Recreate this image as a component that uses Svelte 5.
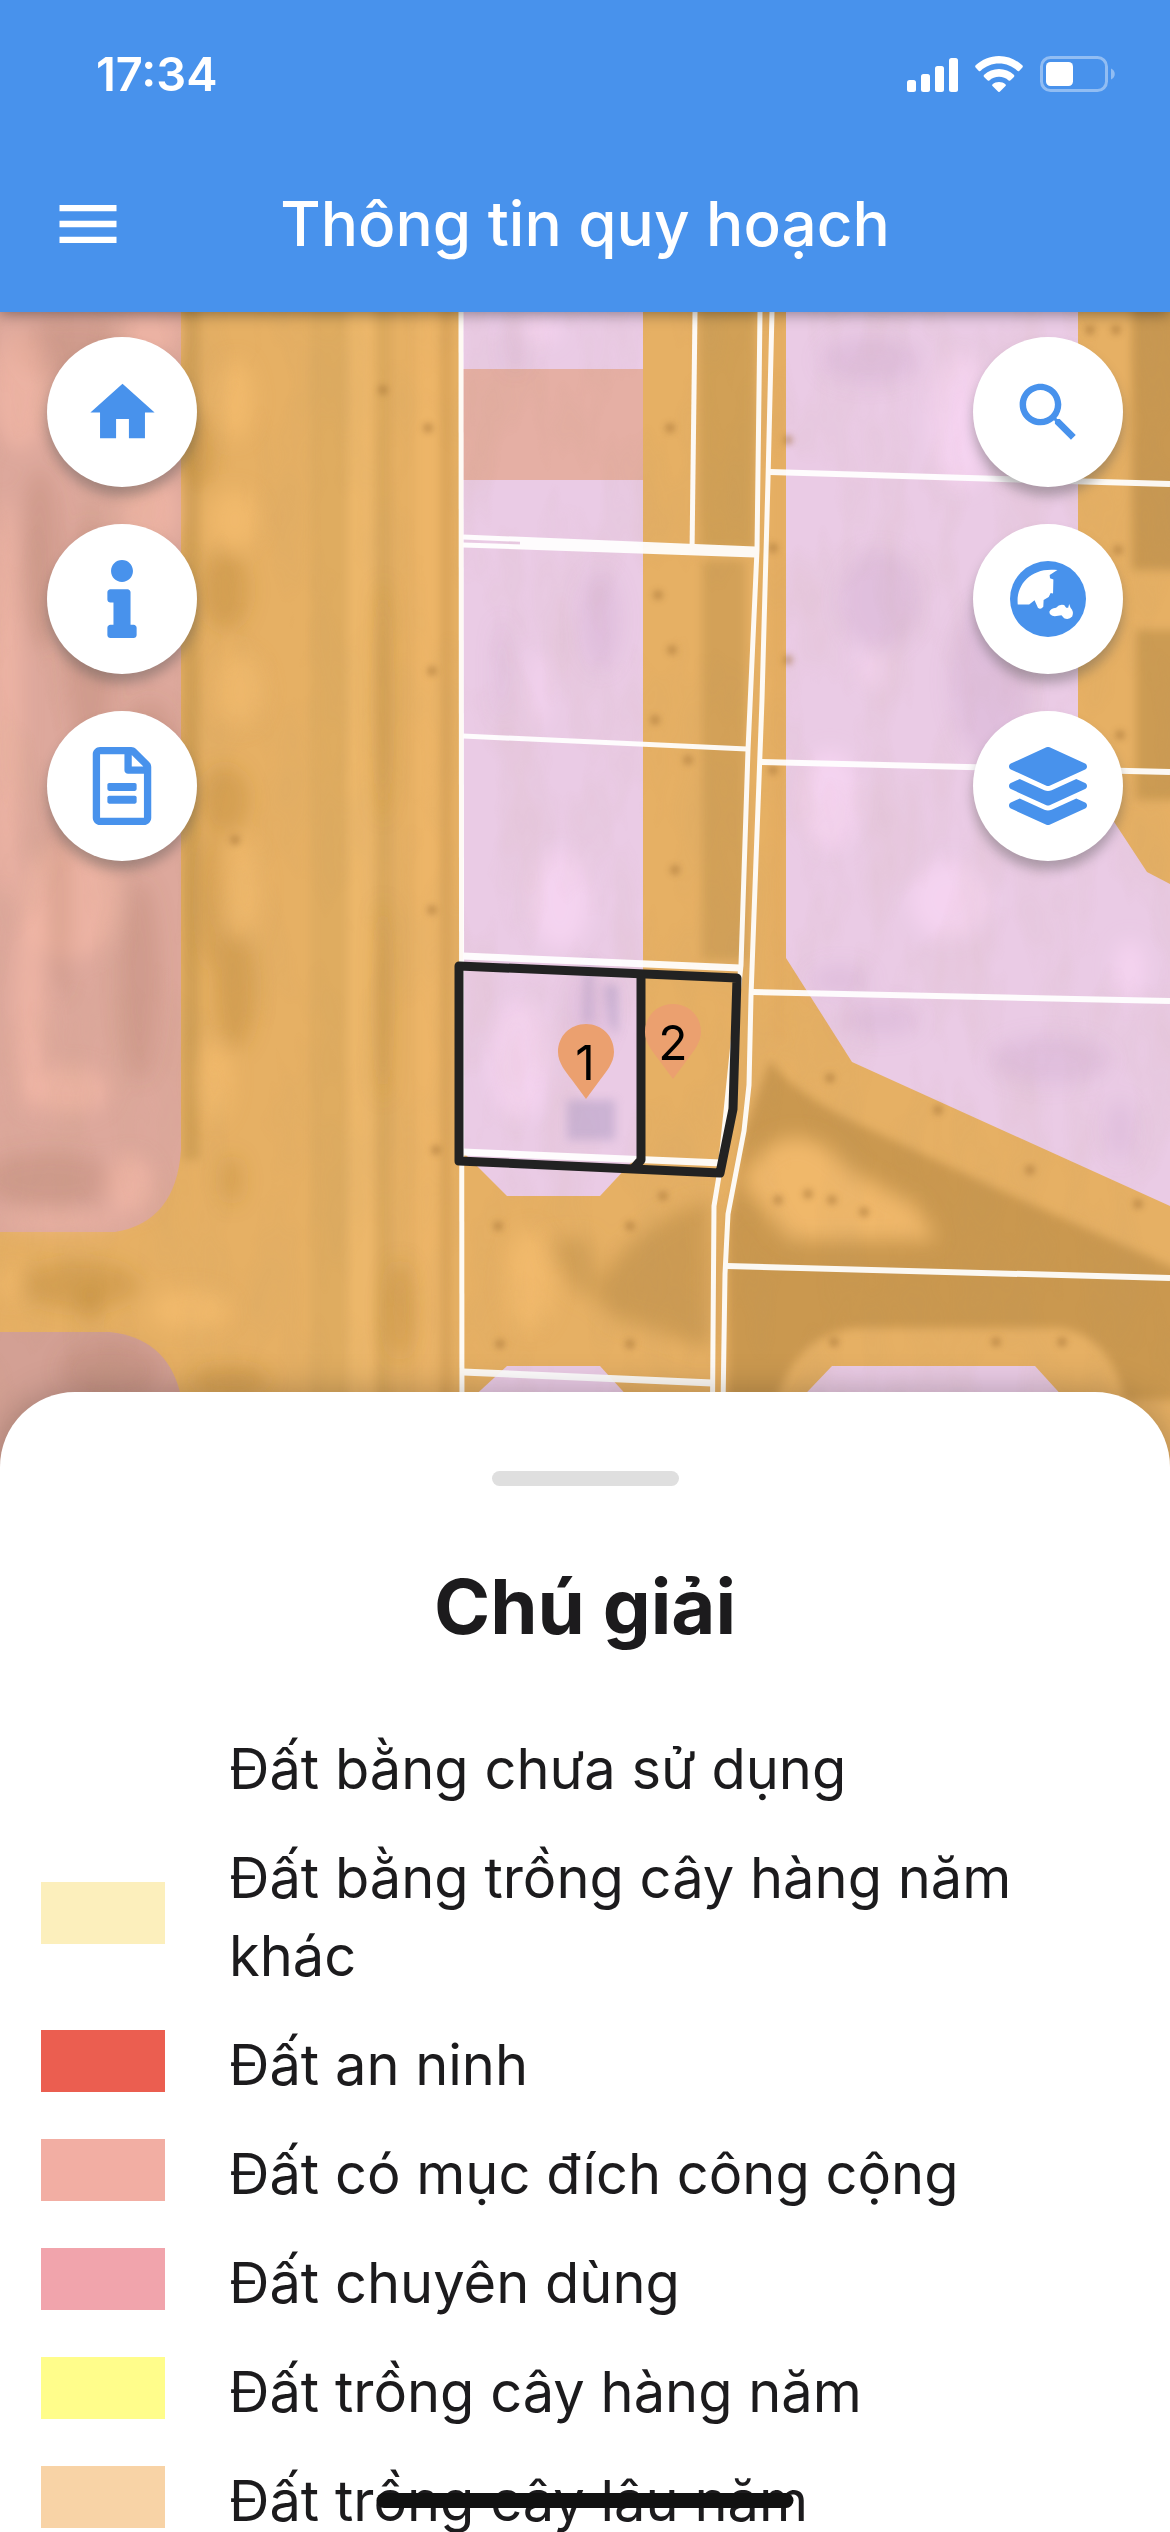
<script>
  const legend = [
    { label: 'Đất bằng chưa sử dụng', color: '#ffffff' },
    { label: 'Đất bằng trồng cây hàng năm khác', color: '#fcefbc' },
    { label: 'Đất an ninh', color: '#eb5e50' },
    { label: 'Đất có mục đích công cộng', color: '#f2aea3' },
    { label: 'Đất chuyên dùng', color: '#f1a4ac' },
    { label: 'Đất trồng cây hàng năm', color: '#fffd8b' },
    { label: 'Đất trồng cây lâu năm', color: '#f8d3a6' }
  ];

  // Soft terrain patches: [cx, cy, rx, ry, tone]
  const tones = {
    d: { fill: '#9c6a4a', opacity: 0.2 },
    l: { fill: '#ffc0ac', opacity: 0.45 },
    o: { fill: '#b07c2c', opacity: 0.32 },
    y: { fill: '#f8bf70', opacity: 0.6 },
    v: { fill: '#b893bd', opacity: 0.2 },
    w: { fill: '#ffdcfb', opacity: 0.5 }
  };
  const patches = [
    [70, 350, 60, 30, 'd'], [20, 390, 28, 60, 'l'], [150, 335, 30, 20, 'l'],
    [40, 560, 20, 90, 'd'], [6, 700, 16, 200, 'l'], [150, 510, 30, 36, 'l'],
    [90, 640, 24, 120, 'd'], [150, 760, 30, 60, 'd'], [70, 900, 50, 60, 'l'],
    [140, 980, 20, 100, 'd'], [30, 1010, 16, 100, 'l'], [60, 900, 12, 100, 'd'],
    [70, 1090, 40, 24, 'l'], [50, 1180, 70, 28, 'd'], [60, 1222, 60, 8, 'l'],
    [130, 1185, 24, 30, 'l'], [110, 1370, 50, 30, 'd'],
    [200, 450, 14, 40, 'o'], [235, 400, 18, 40, 'y'], [225, 590, 24, 40, 'o'],
    [235, 520, 24, 30, 'y'], [240, 690, 24, 36, 'y'], [225, 800, 24, 34, 'o'],
    [210, 900, 10, 70, 'o'], [245, 890, 16, 50, 'y'], [235, 990, 20, 60, 'o'],
    [215, 1080, 16, 40, 'y'], [232, 1180, 10, 24, 'o'], [80, 1285, 60, 24, 'o'],
    [190, 1310, 40, 20, 'y'], [10, 1285, 10, 14, 'y'], [230, 1380, 40, 14, 'o'],
    [90, 1305, 10, 20, 'o'], [400, 1310, 14, 50, 'o'], [383, 700, 6, 120, 'o'],
    [383, 1000, 6, 100, 'o'], [530, 1280, 24, 50, 'y'],
    [515, 345, 8, 26, 'v'], [540, 330, 20, 14, 'w'], [540, 690, 8, 40, 'w'],
    [502, 670, 6, 50, 'v'], [600, 620, 20, 50, 'v'], [560, 900, 30, 50, 'w'],
    [520, 1060, 30, 60, 'w'], [590, 1010, 20, 40, 'v'], [870, 360, 50, 24, 'v'],
    [960, 420, 30, 70, 'w'], [880, 600, 40, 50, 'v'], [872, 670, 12, 20, 'w'],
    [990, 680, 40, 80, 'v'], [830, 800, 30, 50, 'w'], [950, 900, 40, 40, 'w'],
    [1130, 970, 16, 30, 'w'], [1050, 1060, 60, 24, 'v'], [880, 1020, 40, 16, 'v'],
    [1120, 1130, 14, 30, 'v'], [840, 980, 30, 14, 'v']
  ];

  const dots = [
    [428, 428], [432, 671], [432, 910], [436, 1150], [670, 428], [658, 595],
    [672, 650], [655, 720], [688, 760], [675, 870], [778, 1200], [808, 1194],
    [832, 1200], [864, 1212], [830, 1078], [938, 1110], [1030, 1170], [1138, 1204],
    [500, 1344], [630, 1344], [834, 1342], [996, 1342], [1062, 1342], [498, 1226],
    [630, 1226], [663, 1196], [1090, 330], [1116, 330], [1118, 550], [1120, 735],
    [773, 548], [773, 770], [788, 440], [788, 660], [383, 390], [235, 840]
  ];
</script>

<div class="app">
  <header>
    <div class="status">
      <time>17:34</time>
      <div class="status-icons">
        <svg width="51" height="36" viewBox="0 0 51 36" fill="#fff" aria-hidden="true">
          <rect x="0" y="24" width="9" height="12" rx="2.5" /><rect x="14" y="18" width="9" height="18" rx="2.5" />
          <rect x="28" y="10" width="9" height="26" rx="2.5" /><rect x="42" y="2" width="9" height="34" rx="2.5" />
        </svg>
        <svg width="48" height="36" viewBox="0 0 48 36" fill="#fff" aria-hidden="true">
          <path d="M24 0C15 0 7 3.500 .7 9.300c-.7.700-.7 1.500-.1 2.200l3 3.200c.6.700 1.400.7 2.100.1C10.600 10.200 17 7.600 24 7.600s13.400 2.600 18.300 7.200c.7.600 1.500.6 2.100-.1l3-3.200c.6-.7.600-1.500-.1-2.200C41 3.500 33 0 24 0z" />
          <path d="M24 13c-5.600 0-10.800 2.200-14.800 5.700-.7.600-.7 1.500-.1 2.200l3.300 3.400c.6.600 1.400.6 2 .1 2.600-2.300 5.900-3.600 9.600-3.600s7 1.300 9.600 3.600c.6.500 1.400.5 2-.1l3.300-3.400c.6-.7.600-1.600-.1-2.200C34.800 15.200 29.600 13 24 13z" />
          <path d="M24 26c-2.500 0-4.700.8-6.400 2.300-.6.500-.6 1.200-.1 1.800l5.500 5.500c.6.600 1.400.6 2 0l5.500-5.500c.5-.6.500-1.300-.1-1.800C28.700 26.800 26.500 26 24 26z" />
        </svg>
        <svg width="76" height="36" viewBox="0 0 76 36" aria-hidden="true">
          <rect x="1.500" y="1.500" width="65" height="33" rx="9" fill="none" stroke="#91bdf3" stroke-width="3" />
          <rect x="6" y="6" width="27" height="24" rx="4.500" fill="#fff" />
          <path d="M71 12.500c5 2 5 9 0 11z" fill="#91bdf3" />
        </svg>
      </div>
    </div>
    <div class="bar">
      <button class="menu" aria-label="Menu">
        <svg width="76" height="76" viewBox="0 0 24 24" fill="#fff"><path d="M3 18h18v-2H3v2zm0-5h18v-2H3v2zm0-7v2h18V6H3z" /></svg>
      </button>
      <h1>Thông tin quy hoạch</h1>
    </div>
  </header>

  <main>
    <svg class="map" viewBox="0 312 1170 1160" preserveAspectRatio="xMidYMin slice" role="img" aria-label="Bản đồ quy hoạch">
      <defs>
        <filter id="soft" x="-50%" y="-50%" width="200%" height="200%"><feGaussianBlur stdDeviation="10" /></filter>
        <filter id="softer" x="-20%" y="-20%" width="140%" height="140%"><feGaussianBlur stdDeviation="5" /></filter>
        <filter id="dot" x="-100%" y="-100%" width="300%" height="300%"><feGaussianBlur stdDeviation="3" /></filter>
        <filter id="grain" x="0" y="0" width="100%" height="100%">
          <feTurbulence type="fractalNoise" baseFrequency="0.022 0.009" numOctaves="3" seed="4" />
          <feColorMatrix values="0 0 0 0 .45  0 0 0 0 .3  0 0 0 0 .15  .9 0 0 0 -.36" />
        </filter>
      </defs>

      <rect y="312" width="1170" height="1160" fill="#e6b064" />
      <g filter="url(#softer)">
        <rect x="182" y="300" width="18" height="860" fill="#d3a156" />
        <rect x="310" y="300" width="38" height="1180" fill="#dfac60" />
        <rect x="348" y="300" width="26" height="1180" fill="#ecb76a" />
        <rect x="376" y="300" width="16" height="1180" fill="#dca95d" />
        <rect x="416" y="300" width="22" height="1180" fill="#edb568" />
        <rect x="442" y="300" width="8" height="1180" fill="#d8a257" />
        <rect x="699" y="300" width="56" height="250" fill="#d1a057" />
        <rect x="702" y="560" width="44" height="400" fill="#d3a158" />
        <rect x="772" y="300" width="14" height="740" fill="#e5ad62" />
        <rect x="1132" y="300" width="50" height="270" fill="#c99851" />
        <rect x="1136" y="630" width="46" height="170" fill="#cc9b53" />
        <path d="M770 1060 Q790 1090 850 1120 L1000 1190 L1190 1275 V1400 H1125 Q1110 1335 1060 1328 H860 Q800 1330 776 1400 H728 V1230 L745 1130Z" fill="#ca9850" />
      </g>
      <g filter="url(#soft)">
        <path d="M740 1180 Q790 1100 850 1170 L915 1205 L936 1240 H790 L760 1205Z" fill="#f0b86b" />
        <path d="M600 1280 Q640 1220 710 1200 V1350 L640 1325 Q600 1320 598 1290Z" fill="#cd9b52" />
        <path d="M548 1240 L590 1238 L600 1300 Q560 1290 548 1240Z" fill="#d3a057" />
      </g>

      <path d="M0 312H181V1150Q176 1222 115 1232H0Z" fill="#dda89c" />
      <path d="M0 1332H110Q166 1338 180 1392V1472H0Z" fill="#d3a094" />
      <g fill="#eacbe5">
        <path d="M463 312H643V1150L600 1196H507L463 1152Z" />
        <path d="M507 1366H600L640 1410V1472H470V1400Z" />
        <path d="M786 312H1078V767L1147 872L1170 884V1206L852 1062L786 958Z" />
        <path d="M832 1366H1035L1075 1410V1472H790V1410Z" />
      </g>
      <rect x="463" y="369" width="180" height="111" fill="#e5afa4" />

      <g filter="url(#soft)">
        {#each patches as [cx, cy, rx, ry, tone]}
          <ellipse {cx} {cy} {rx} {ry} fill={tones[tone].fill} opacity={tones[tone].opacity} />
        {/each}
      </g>
      <rect y="312" width="1170" height="1160" filter="url(#grain)" opacity=".22" />
      <g filter="url(#dot)" fill="#a06f35" opacity=".5">
        {#each dots as [cx, cy]}
          <circle {cx} {cy} r="5" />
        {/each}
      </g>
      <g filter="url(#softer)" fill="#b7a3c8" opacity=".6">
        <rect x="567" y="1100" width="48" height="40" />
        <path d="M586 960h6v62h-8zM604 985h14v50l-8-10z" />
      </g>

      <g fill="none" stroke="#fff" stroke-width="5" opacity=".93">
        <path d="M461 312L462 1472" />
        <path d="M695 312L692 553" />
        <path d="M760 312L757 550L748 750L741 965L720 1170L714 1206L712 1472" />
        <path d="M772 312L768 480L762 700L756 860L751 996L749 1085L744 1131L728 1214L725 1274L722 1472" />
        <path d="M463 537L755 549M463 545L755 555M520 543L755 552" />
        <path d="M463 736L747 749" />
        <path d="M463 956L740 968" stroke-width="7" />
        <path d="M463 1152L722 1163" stroke-width="7" />
        <path d="M463 1372L712 1383" stroke-width="7" />
        <path d="M770 472L1170 484M760 762L1170 772M753 992L1170 1001M727 1266L1170 1278" stroke-width="6" />
      </g>

      <g fill="none" stroke="#222" stroke-width="9" stroke-linejoin="round">
        <path d="M459 966L737 978L733 1109L720 1173L459 1161Z" />
        <path d="M641 974V1160L634 1168" />
      </g>

      <g fill="#eba06f">
        <path d="M586 1024c-16 0-28 12-28 28 0 11 8 20 14 28l14 19 14-19c6-8 14-17 14-28 0-16-12-28-28-28z" />
        <path d="M673 1004c-16 0-28 12-28 28 0 11 8 20 14 28l14 19 14-19c6-8 14-17 14-28 0-16-12-28-28-28z" />
      </g>
      <g class="pin-text">
        <text x="585" y="1080">1</text>
        <text x="673" y="1060">2</text>
      </g>
    </svg>

    <div class="controls">
      <div class="stack">
        <button aria-label="Trang chủ"><svg width="77" height="77" viewBox="0 0 24 24"><path d="M10 20v-6h4v6h5v-8h3L12 3 2 12h3v8z" /></svg></button>
        <button aria-label="Thông tin"><svg width="78" height="78" viewBox="-160 0 512 512"><path d="M20 424.229h20V279.771H20c-11.046 0-20-8.954-20-20V212c0-11.046 8.954-20 20-20h112c11.046 0 20 8.954 20 20v212.229h20c11.046 0 20 8.954 20 20V492c0 11.046-8.954 20-20 20H20c-11.046 0-20-8.954-20-20v-47.771c0-11.046 8.954-20 20-20zM96 0C56.235 0 24 32.235 24 72s32.235 72 72 72 72-32.235 72-72S135.764 0 96 0z" /></svg></button>
        <button aria-label="Tài liệu"><svg width="78" height="78" viewBox="-64 0 512 512"><path d="M369.900 97.900L286 14C277 5 264.800 0 252.100 0H48C21.500 0 0 21.500 0 48v416c0 26.500 21.500 48 48 48h288c26.500 0 48-21.500 48-48V131.900c0-12.700-5.100-25-14.100-34zM332.100 128H256V51.900l76.100 76.100zM48 464V48h160v104c0 13.300 10.700 24 24 24h104v288H48z" /><rect x="96" y="236" width="192" height="52" rx="12" /><rect x="96" y="320" width="192" height="52" rx="12" /></svg></button>
      </div>
      <div class="stack">
        <button aria-label="Tìm kiếm"><svg width="77" height="77" viewBox="0 0 24 24"><path d="M15.500 14h-.79l-.28-.27C15.410 12.590 16 11.110 16 9.500 16 5.910 13.090 3 9.500 3S3 5.910 3 9.500 5.910 16 9.500 16c1.610 0 3.090-.59 4.230-1.570l.27.28v.79l5 4.990L20.490 19l-4.990-5zm-6 0C7.010 14 5 11.990 5 9.500S7.010 5 9.500 5 14 7.010 14 9.500 11.990 14 9.500 14z" /></svg></button>
        <button aria-label="Bản đồ nền"><svg width="76" height="76" viewBox="147 125 226 226"><circle cx="260" cy="238" r="113" /><path fill="#fff" d="M170 254C164 190 215 142 288 152L265 167L266 176L276 180L275 222L268 220L262 232L247 241L246 261Q238 271 230 264L220 242L204 254Z" /><path fill="#fff" d="M264 276Q268 266 284 264Q294 252 308 256L314 264H320L323 253L327 264Q338 275 332 290Q322 301 308 295L300 286L280 289Q264 288 264 276Z" /></svg></button>
        <button aria-label="Lớp bản đồ"><svg width="78" height="78" viewBox="0 0 512 512"><path d="M12.410 148.020l232.940 105.670c6.800 3.090 14.490 3.090 21.290 0l232.940-105.670c16.550-7.510 16.550-32.520 0-40.030L266.650 2.310a25.607 25.607 0 0 0-21.290 0L12.410 107.980c-16.550 7.510-16.550 32.530 0 40.040zm487.180 88.280l-58.090-26.330-161.640 73.270c-7.560 3.430-15.590 5.170-23.860 5.170s-16.290-1.740-23.860-5.170L70.510 209.970l-58.100 26.330c-16.550 7.500-16.550 32.500 0 40l232.940 105.590c6.800 3.080 14.490 3.080 21.290 0L499.590 276.300c16.550-7.500 16.550-32.500 0-40zm0 127.800l-57.870-26.230-161.860 73.370c-7.560 3.430-15.590 5.170-23.860 5.170s-16.290-1.740-23.860-5.170L70.290 337.870 12.410 364.100c-16.550 7.500-16.550 32.500 0 40l232.940 105.590c6.800 3.080 14.490 3.080 21.290 0L499.590 404.100c16.550-7.500 16.550-32.500 0-40z" /></svg></button>
      </div>
    </div>

    <section class="sheet" aria-labelledby="legend-title">
      <div class="handle"></div>
      <h2 id="legend-title">Chú giải</h2>
      <ul>
        {#each legend as item}
          <li>
            <span class="swatch" style:background={item.color}></span>
            <span class="label">{item.label}</span>
          </li>
        {/each}
      </ul>
    </section>
  </main>
  <div class="home-indicator"></div>
</div>

<style>
  :global(body) {
    margin: 0;
  }

  .app {
    position: relative;
    display: flex;
    flex-direction: column;
    height: 100vh;
    overflow: hidden;
    background: #fff;
    color: #1c1b1d;
    font-family: Inter, Roboto, 'Noto Sans', sans-serif;
  }

  header {
    position: relative;
    z-index: 2;
    flex: none;
    padding-bottom: 4px;
    background: #4892ec;
    color: #fff;
    box-shadow: 0 2px 14px rgba(0, 0, 0, 0.4);
  }

  .status {
    display: flex;
    align-items: center;
    justify-content: space-between;
    height: 92px;
    padding: 28px 54px 20px 96px;
  }

  time {
    font-size: 47px;
    font-weight: 600;
    line-height: 56px;
  }

  .status-icons {
    display: flex;
    gap: 17px;
  }

  .status-icons svg {
    display: block;
  }

  .bar {
    display: grid;
    grid-template-columns: 76px 1fr 76px;
    align-items: center;
    height: 168px;
    padding: 0 50px;
  }

  button {
    display: grid;
    place-items: center;
    padding: 0;
    border: 0;
    background: none;
    cursor: pointer;
  }

  h1 {
    margin: 0;
    font-size: 62px;
    font-weight: 500;
    line-height: 76px;
    text-align: center;
    white-space: nowrap;
  }

  main {
    position: relative;
    display: flex;
    flex: 1;
    flex-direction: column;
    min-height: 0;
  }

  .map {
    position: absolute;
    top: 0;
    left: 0;
    width: 100%;
    height: 1160px;
  }

  .pin-text {
    fill: #000;
    font-size: 48px;
    text-anchor: middle;
  }

  .controls {
    position: relative;
    display: flex;
    flex: none;
    justify-content: space-between;
    box-sizing: border-box;
    height: 1080px;
    padding: 25px 47px;
  }

  .stack {
    display: flex;
    flex-direction: column;
    gap: 37px;
  }

  .stack button {
    width: 150px;
    height: 150px;
    border-radius: 50%;
    background: #fff;
    box-shadow: 0 9px 12px rgba(80, 80, 80, 0.4);
    fill: #4892ec;
  }

  .sheet {
    position: relative;
    flex: 1;
    min-height: 0;
    overflow: hidden;
    border-radius: 75px 75px 0 0;
    background: #fff;
    box-shadow: 0 0 36px rgba(0, 0, 0, 0.25);
  }

  .handle {
    width: 187px;
    height: 15px;
    margin: 79px auto 0;
    border-radius: 8px;
    background: #dfdfdf;
  }

  h2 {
    margin: 72px 0 0;
    font-size: 76px;
    font-weight: 700;
    line-height: 96px;
    text-align: center;
  }

  ul {
    display: flex;
    flex-direction: column;
    gap: 31px;
    margin: 72px 0 0;
    padding: 0 41px;
    list-style: none;
  }

  li {
    display: grid;
    grid-template-columns: 124px 1fr;
    column-gap: 64px;
    align-items: center;
  }

  .swatch {
    height: 62px;
  }

  .label {
    padding-top: 4px;
    margin-bottom: -4px;
    font-size: 56px;
    line-height: 78px;
  }

  .home-indicator {
    position: absolute;
    bottom: 24px;
    left: 50%;
    z-index: 3;
    width: 417px;
    height: 15px;
    border-radius: 8px;
    background: #111;
    transform: translateX(-50%);
  }
</style>
